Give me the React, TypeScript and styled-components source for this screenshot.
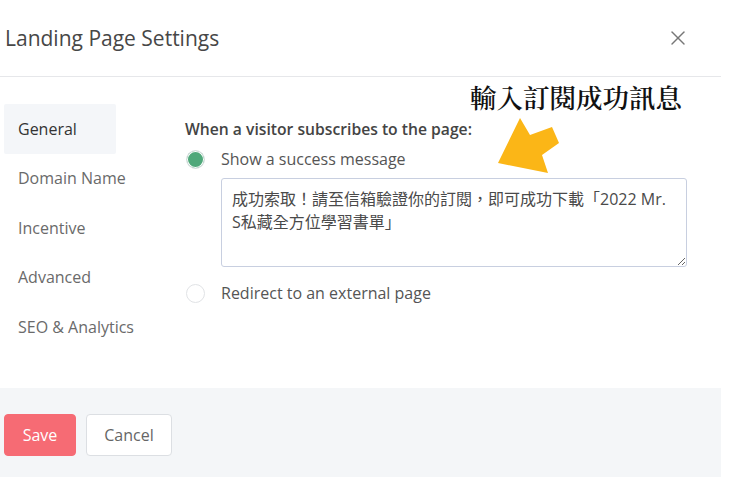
import React from "react";
import styled, { createGlobalStyle } from "styled-components";
import { X } from "lucide-react";

const GlobalStyle = createGlobalStyle`
  html, body {
    margin: 0;
    padding: 0;
    background: #ffffff;
  }
  body {
    font-family: "Open Sans", "Noto Sans", "Noto Sans CJK TC", sans-serif;
    color: #444;
  }
`;

const Modal = styled.div`
  position: relative;
  width: 721px;
  background: #ffffff;
`;

const Header = styled.header`
  height: 76px;
  display: flex;
  align-items: center;
  justify-content: space-between;
  padding: 0 31px 0 5px;
  border-bottom: 1px solid #e6e7ea;
`;

const Title = styled.h1`
  margin: 0;
  font-size: 21px;
  font-weight: 500;
  color: #474747;
`;

const CloseButton = styled.button`
  width: 24px;
  height: 24px;
  padding: 0;
  border: 0;
  background: none;
  color: #777;
  display: flex;
  align-items: center;
  justify-content: center;
  cursor: pointer;
`;

const Body = styled.div`
  height: 311px;
  display: flex;
  padding-top: 27px;
  box-sizing: border-box;
`;

const Sidebar = styled.nav`
  width: 112px;
  margin-left: 4px;
  display: flex;
  flex-direction: column;
`;

const NavItem = styled.div<{ $active?: boolean }>`
  height: 49.5px;
  display: flex;
  align-items: center;
  padding-left: 14px;
  font-size: 16px;
  white-space: nowrap;
  border-radius: 2px;
  color: ${({ $active }) => ($active ? "#333" : "#6a6a6a")};
  font-weight: ${({ $active }) => ($active ? 500 : 400)};
  background: ${({ $active }) => ($active ? "#f4f6f9" : "transparent")};
`;

const Content = styled.section`
  margin-left: 69px;
  padding-top: 15px;
  display: flex;
  flex-direction: column;
`;

const Question = styled.div`
  font-size: 15.7px;
  line-height: 20px;
  font-weight: 600;
  color: #444;
`;

const Option = styled.label<{ $gap: number }>`
  display: flex;
  align-items: center;
  gap: 16px;
  height: 20px;
  margin-top: ${({ $gap }) => $gap}px;
  margin-left: 1px;
  font-size: 16px;
  color: #555;
`;

const Radio = styled.span<{ $checked?: boolean }>`
  width: 19px;
  height: 19px;
  box-sizing: border-box;
  border-radius: 50%;
  border: 1px solid #e1e3e6;
  background: ${({ $checked }) => ($checked ? "#4fa87a" : "#fff")};
  box-shadow: ${({ $checked }) => ($checked ? "inset 0 0 0 1px #fff" : "none")};
  flex-shrink: 0;
`;

const MessageBox = styled.textarea`
  display: block;
  margin: 9px 0 0 36px;
  width: 466px;
  height: 89px;
  box-sizing: border-box;
  padding: 9px 14px 8px 10px;
  border: 1px solid #c8cfe0;
  border-radius: 3px;
  font-family: "Open Sans", "Noto Sans CJK TC", sans-serif;
  font-size: 16px;
  line-height: 23px;
  color: #4a4a4a;
  resize: vertical;
  outline: none;
`;

const Footer = styled.footer`
  height: 89px;
  box-sizing: border-box;
  background: #f4f6f8;
  display: flex;
  align-items: flex-start;
  gap: 10px;
  padding: 26px 0 0 4px;
`;

const Button = styled.button<{ $primary?: boolean }>`
  height: 42px;
  width: ${({ $primary }) => ($primary ? 72 : 86)}px;
  border-radius: 4px;
  font-family: "Open Sans", sans-serif;
  font-size: 16px;
  cursor: pointer;
  border: 1px solid ${({ $primary }) => ($primary ? "#f66b74" : "#dcdfe3")};
  background: ${({ $primary }) => ($primary ? "#f66b74" : "#ffffff")};
  color: ${({ $primary }) => ($primary ? "#ffffff" : "#666")};
`;

const Annotation = styled.div`
  position: absolute;
  left: 466px;
  top: 80px;
  width: 230px;
  pointer-events: none;
`;

const AnnotationText = styled.div`
  font-family: "Noto Serif CJK TC", "Noto Sans CJK TC", serif;
  font-size: 26.5px;
  line-height: 34px;
  font-weight: 600;
  color: #111;
  padding-left: 4px;
  white-space: nowrap;
`;

const ArrowSvg = styled.svg`
  display: block;
  margin-top: 2px;
`;

const navItems = ["General", "Domain Name", "Incentive", "Advanced", "SEO & Analytics"];

const message =
  "成功索取！請至信箱驗證你的訂閱，即可成功下載「2022 Mr. S私藏全方位學習書單」 ";

export default function App() {
  return (
    <>
      <GlobalStyle />
      <Modal>
        <Header>
          <Title>Landing Page Settings</Title>
          <CloseButton aria-label="Close">
            <X size={24} strokeWidth={1.4} />
          </CloseButton>
        </Header>
        <Body>
          <Sidebar>
            {navItems.map((item, i) => (
              <NavItem key={item} $active={i === 0}>
                {item}
              </NavItem>
            ))}
          </Sidebar>
          <Content>
            <Question>When a visitor subscribes to the page:</Question>
            <Option $gap={10}>
              <Radio $checked />
              Show a success message
            </Option>
            <MessageBox defaultValue={message} />
            <Option $gap={16}>
              <Radio />
              Redirect to an external page
            </Option>
          </Content>
        </Body>
        <Footer>
          <Button $primary>Save</Button>
          <Button>Cancel</Button>
        </Footer>
        <Annotation>
          <AnnotationText>輸入訂閱成功訊息</AnnotationText>
          {/* arrow drawn in page coords shifted by the overlay origin (466, 116) */}
          <ArrowSvg width="100" height="62" viewBox="466 116 100 62">
            <polygon
              points="498,163 520,118 530,135 552,127 559,143 542,155 548,173"
              fill="#fbb617"
            />
          </ArrowSvg>
        </Annotation>
      </Modal>
    </>
  );
}
